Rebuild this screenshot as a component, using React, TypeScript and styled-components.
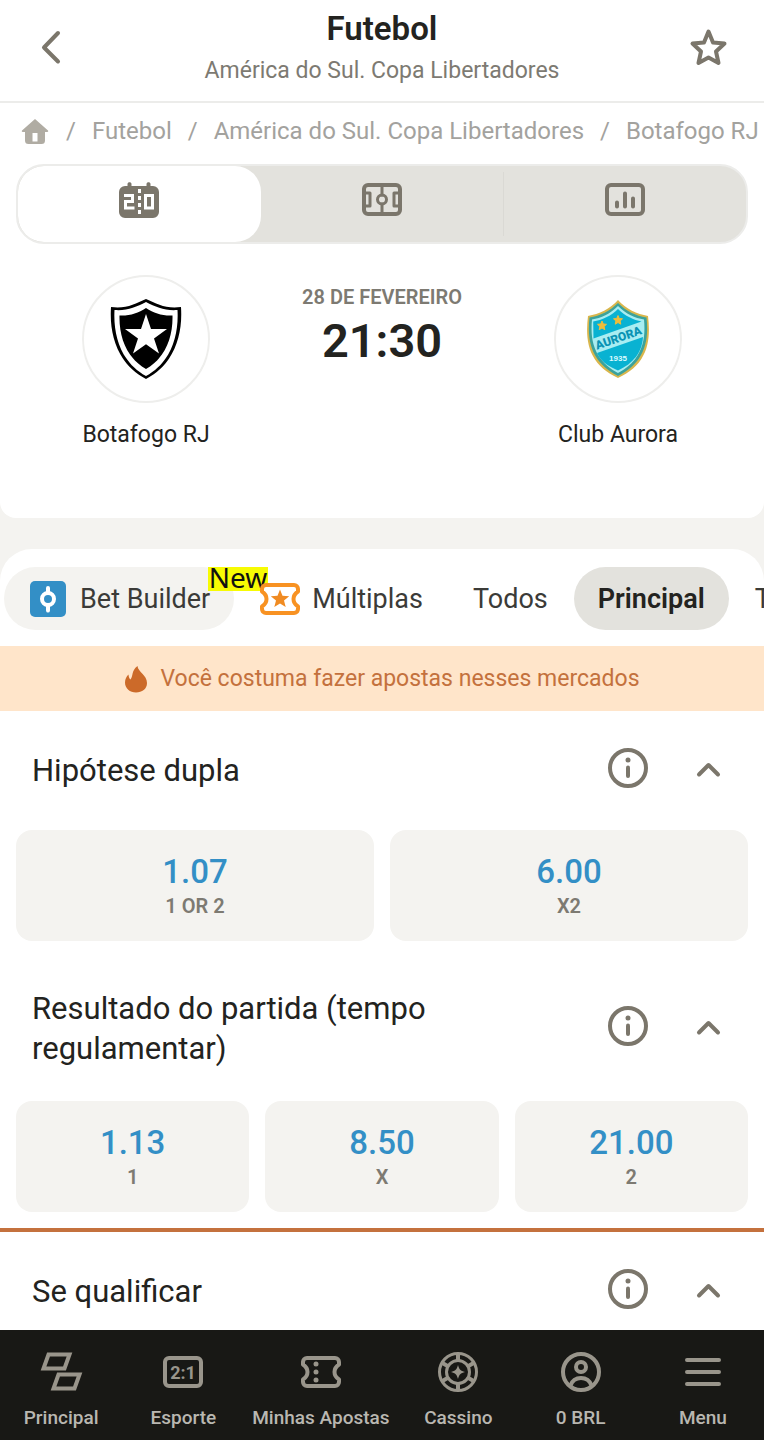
import React from "react";
import styled, { createGlobalStyle } from "styled-components";

const color = {
  ink: "#232320",
  text: "#3b3b38",
  icon: "#7b766b",
  muted: "#7d7a72",
  faint: "#a3a29e",
  line: "#ececea",
  fill: "#e3e2dd",
  soft: "#f4f3f0",
  blue: "#338fc6",
  orange: "#c4713d",
  peach: "#ffe5ca",
  night: "#181815",
};

const GlobalStyle = createGlobalStyle`
  *, *::before, *::after { box-sizing: border-box; }
  body {
    margin: 0;
    background: #fff;
    color: ${color.ink};
    font-family: Roboto, "Liberation Sans", sans-serif;
  }
  button {
    border: 0;
    padding: 0;
    background: none;
    color: inherit;
    font: inherit;
    cursor: pointer;
  }
  a { color: inherit; text-decoration: none; }
  h1, h2, p, ol { margin: 0; padding: 0; }
  svg { display: block; flex: none; }
`;

const Screen = styled.div`
  display: flex;
  flex-direction: column;
  height: 100vh;
  overflow: hidden;
`;

const TopBar = styled.header`
  flex: none;
  display: flex;
  align-items: center;
  justify-content: space-between;
  height: 103px;
  padding: 0 32px 8px;
  border-bottom: 2px solid ${color.line};
`;

const IconButton = styled.button`
  display: flex;
  align-items: center;
  justify-content: center;
  width: 48px;
  height: 48px;
  color: ${color.icon};
`;

const Heading = styled.div`
  padding-top: 4px;
  text-align: center;
`;

const PageTitle = styled.h1`
  font-size: 33px;
  line-height: 44px;
  font-weight: 600;
`;

const PageSubtitle = styled.p`
  font-size: 23px;
  line-height: 40px;
  color: ${color.muted};
`;

const Content = styled.main`
  flex: 1;
  min-height: 0;
  overflow-x: hidden;
  overflow-y: auto;
  scrollbar-width: none;
  background: ${color.soft};
`;

const MatchPanel = styled.section`
  background: #fff;
  border-radius: 0 0 16px 16px;
  padding-bottom: 67px;
`;

const Crumbs = styled.ol`
  display: flex;
  align-items: center;
  height: 61px;
  padding: 0 0 6px 20px;
  list-style: none;
  overflow: hidden;
  white-space: nowrap;
  font-size: 24px;
  line-height: 32px;
  color: ${color.faint};
`;

const Crumb = styled.li`
  display: flex;
  align-items: center;
  & + &::before {
    content: "/";
    margin: 0 16px;
  }
`;

const ViewTabs = styled.div`
  display: grid;
  grid-template-columns: repeat(3, 1fr);
  height: 80px;
  margin: 0 16px;
  border: 2px solid ${color.line};
  border-radius: 28px;
  background: ${color.fill};
  overflow: hidden;
`;

const ViewTab = styled.button<{ $active?: boolean; $divider?: boolean }>`
  display: flex;
  align-items: center;
  justify-content: center;
  padding-bottom: 8px;
  color: ${color.icon};
  background-color: ${(p) => (p.$active ? "#fff" : "transparent")};
  border-radius: ${(p) => (p.$active ? "26px" : "0")};
  background-image: ${(p) => (p.$divider ? "linear-gradient(#dad9d4, #dad9d4)" : "none")};
  background-repeat: no-repeat;
  background-position: left center;
  background-size: 1px 64px;
`;

const Teams = styled.div`
  display: grid;
  grid-template-columns: 228px 1fr 228px;
  padding: 31px 32px 0;
`;

const Team = styled.div`
  display: flex;
  flex-direction: column;
  align-items: center;
  gap: 16px;
  font-size: 23px;
  line-height: 32px;
`;

const Crest = styled.div`
  display: flex;
  align-items: center;
  justify-content: center;
  width: 128px;
  height: 128px;
  border: 2px solid #eeeeec;
  border-radius: 50%;
`;

const Kickoff = styled.div`
  padding-top: 6px;
  text-align: center;
  white-space: nowrap;
`;

const KickoffDate = styled.p`
  font-size: 20px;
  line-height: 32px;
  font-weight: 600;
  color: ${color.muted};
`;

const KickoffTime = styled.p`
  font-size: 47px;
  line-height: 56px;
  font-weight: 600;
`;

const MarketsPanel = styled.section`
  margin-top: 31px;
  background: #fff;
  border-radius: 32px 32px 0 0;
  overflow: hidden;
`;

const FilterBar = styled.div`
  display: flex;
  gap: 2px;
  padding: 18px 0 16px 4px;
  overflow: hidden;
`;

const Filter = styled.button<{ $tone?: "soft" | "active" }>`
  position: relative;
  flex: none;
  display: flex;
  align-items: center;
  gap: 12px;
  height: 63px;
  padding: 0 24px;
  border-radius: 32px;
  font-size: 27px;
  line-height: 32px;
  white-space: nowrap;
  color: ${(p) => (p.$tone === "active" ? color.ink : color.text)};
  font-weight: ${(p) => (p.$tone === "active" ? 600 : 400)};
  background: ${(p) =>
    p.$tone === "active" ? color.fill : p.$tone === "soft" ? color.soft : "transparent"};
`;

const NewBadge = styled.span`
  position: absolute;
  top: 0;
  right: -34px;
  padding: 0 1px 4px;
  background: #f7fb04;
  color: #111;
  font-family: "Noto Sans", "Open Sans", sans-serif;
  font-size: 28px;
  line-height: 20px;
`;

const Notice = styled.p`
  display: flex;
  align-items: center;
  justify-content: center;
  gap: 12px;
  height: 65px;
  background: ${color.peach};
  color: ${color.orange};
  font-size: 23px;
  line-height: 32px;
`;

const Market = styled.section<{ $marked?: boolean }>`
  padding-bottom: 16px;
  border-bottom: ${(p) => (p.$marked ? `4px solid ${color.orange}` : "0")};
`;

const MarketHeader = styled.div`
  display: flex;
  align-items: center;
  gap: 16px;
  min-height: 119px;
  padding: 32px;
`;

const MarketTitle = styled.h2`
  flex: 1;
  font-size: 31px;
  line-height: 40px;
  font-weight: 400;
`;

const TitleText = styled.span`
  display: block;
  max-width: 440px;
`;

const MarketActions = styled.div`
  display: flex;
  gap: 32px;
  padding-bottom: 4px;
`;

const OddsGrid = styled.div<{ $columns: number }>`
  display: grid;
  grid-template-columns: repeat(${(p) => p.$columns}, 1fr);
  gap: 16px;
  padding: 0 16px;
`;

const Odd = styled.button`
  display: flex;
  flex-direction: column;
  align-items: center;
  justify-content: center;
  height: 111px;
  border-radius: 16px;
  background: ${color.soft};
`;

const OddValue = styled.span`
  font-size: 33px;
  line-height: 40px;
  font-weight: 500;
  color: ${color.blue};
`;

const OddLabel = styled.span`
  font-size: 20px;
  line-height: 28px;
  font-weight: 600;
  color: ${color.muted};
`;

const BottomNav = styled.nav`
  flex: none;
  display: flex;
  height: 110px;
  padding-top: 20px;
  background: ${color.night};
`;

const NavItem = styled.a<{ $wide?: boolean }>`
  flex: ${(p) => (p.$wide ? 5 : 4)} 1 0;
  min-width: 0;
  display: flex;
  flex-direction: column;
  align-items: center;
  gap: 8px;
  color: #99958b;
`;

const NavLabel = styled.span`
  font-size: 19px;
  line-height: 32px;
  font-weight: 500;
  white-space: nowrap;
  color: #b9b7b1;
`;

const stroke = {
  fill: "none",
  stroke: "currentColor",
  strokeLinecap: "round" as const,
  strokeLinejoin: "round" as const,
};

const BackIcon = () => (
  <svg width="40" height="40" viewBox="0 0 40 40" {...stroke} strokeWidth="4" aria-hidden="true">
    <path d="M22 6 8 20.500 22 34.500" />
  </svg>
);

const StarIcon = () => (
  <svg width="40" height="40" viewBox="0 0 40 40" {...stroke} strokeWidth="4" aria-hidden="true">
    <path d="M20.500 4.500 25 15.500 36.500 16.500 28 24.500 30.500 36 20.500 30.500 10.500 36 13 24.500 4.500 16.500 16 15.500Z" />
  </svg>
);

const HomeIcon = () => (
  <svg width="30" height="30" viewBox="0 0 30 30" aria-hidden="true">
    <path
      fill="#b0aca3"
      fillRule="evenodd"
      d="M15 3 28 14.500c.5.700.2 1.500-.7 1.500H25v8.500a3.500 3.500 0 0 1-3.500 3.500h-13A3.500 3.500 0 0 1 5 24.500V16H2.700C1.800 16 1.500 15.200 2 14.500ZM12.500 17V25.500h5v-8.500Z"
    />
  </svg>
);

const ScoreboardIcon = () => (
  <svg width="40" height="40" viewBox="0 0 40 40" aria-hidden="true">
    <path
      fill="currentColor"
      d="M8.500 4c0-2.200 4-2.200 4 0v2h15V4c0-2.200 4-2.200 4 0v2H34a6 6 0 0 1 6 6v20a6 6 0 0 1-6 6H6a6 6 0 0 1-6-6V12a6 6 0 0 1 6-6h2.500Z"
    />
    <path fill="none" stroke="#fff" strokeWidth="3" d="M5 15.500h8.500v6h-7v6.500H15.500M26.500 15.500h7V28h-7Z" />
    <path fill="none" stroke="#fff" strokeWidth="3" strokeDasharray="4 3" d="M20.500 9V35" />
  </svg>
);

const PitchIcon = () => (
  <svg width="42" height="40" viewBox="0 0 42 40" {...stroke} strokeWidth="4" aria-hidden="true">
    <rect x="3" y="5" width="36" height="29" rx="4" />
    <path strokeWidth="3" d="M4 13h5v13H4M38 13h-5v13H38M21 6v9M21 24v9" />
    <circle cx="21" cy="19.500" r="4.500" strokeWidth="3" />
  </svg>
);

const StatsIcon = () => (
  <svg width="42" height="40" viewBox="0 0 42 40" {...stroke} strokeWidth="4" aria-hidden="true">
    <rect x="3" y="5" width="36" height="29" rx="4" />
    <path d="M13 22.500v4M21 13.500v13M29 18.500v8" />
  </svg>
);

const BotafogoCrest = () => (
  <svg width="72" height="82" viewBox="0 0 72 82" role="img" aria-label="Botafogo RJ">
    <path d="M1 9C16 11 25 6 36 1c11 5 20 10 35 8C73 39 63 67 36 81 9 67-1 39 1 9Z" fill="#000" />
    <path d="M4.500 12C17 13 26 9 36 4c10 5 19 9 31.500 8C69 39 60 65 36 78 12 65 3 39 4.500 12Z" fill="#fff" />
    <path d="M9.500 17.500C20 18 28 15 36 10c8 5 16 8 26.500 7.500C63 40 55 60 36 71 17 60 9 40 9.500 17.500Z" fill="#000" />
    <path d="m36 16 5 15H57L44 40.500 49 55.500 36 46.200 23 55.500l5-15L15 31h16Z" fill="#fff" />
  </svg>
);

const AuroraCrest = () => (
  <svg width="64" height="80" viewBox="0 0 64 80" role="img" aria-label="Club Aurora">
    <path d="M32 1C40 10 51 15 62 17c3 25 0 48-30 62C2 65-1 42 2 17 13 15 24 10 32 1Z" fill="#d9b64c" />
    <path d="M32 4C40 12 50 17 60.500 18.500 63 42 59 63 32 77 5 63 1 42 3.500 18.500 14 17 24 12 32 4Z" fill="#3ba29c" />
    <path d="M32 7C40 15 49 19 58 20.500 60 42 56 61 32 74 8 61 4 42 6 20.500 15 19 24 15 32 7Z" fill="#a8edf2" />
    <path d="M32 10C39 17 48 21 55.500 22.500l-48 17-.3-17C16 21 25 17 32 10Z" fill="#09b2d2" />
    <path d="M11 54 57 38C56 53 48 64 32 71.500 21 67 14 61 11 54Z" fill="#09b2d2" />
    <path d="m16 22 1.300 3 3.200.3-2.400 2.200.7 3.200-2.800-1.700-2.800 1.700.7-3.200-2.400-2.200 3.200-.3ZM32 16.500l1.300 3 3.200.3-2.400 2.200.7 3.200-2.800-1.700-2.800 1.700.7-3.200-2.400-2.200 3.200-.3Z" fill="#efbd3a" stroke="#efbd3a" />
    <text x="32.500" y="43" transform="rotate(-19 32.500 39)" textAnchor="middle" fontFamily="Roboto, sans-serif" fontSize="12" fontWeight="900" fill="#0a93b4">
      AURORA
    </text>
    <text x="32" y="62" textAnchor="middle" fontFamily="Liberation Sans, sans-serif" fontSize="8" fontWeight="700" fill="#d9fbff">
      1935
    </text>
  </svg>
);

const BuilderIcon = () => (
  <svg width="40" height="40" viewBox="0 0 40 40" aria-hidden="true">
    <rect x="2" y="2" width="36" height="36" rx="5" fill={color.blue} />
    <g fill="none" stroke="#fff" strokeWidth="4" strokeLinecap="round">
      <circle cx="20" cy="20" r="6" />
      <path d="M20 9v5M20 26v5.500" />
    </g>
  </svg>
);

const ComboSvg = styled.svg`
  position: relative;
  z-index: 1;
`;

const ComboIcon = () => (
  <ComboSvg width="40" height="40" viewBox="0 0 40 40" aria-hidden="true">
    <path
      d="M6 6h28a4 4 0 0 1 4 4v2.500c-6 4-6 11 0 15V30a4 4 0 0 1-4 4H6a4 4 0 0 1-4-4v-2.500c6-4 6-11 0-15V10a4 4 0 0 1 4-4Z"
      fill="#fff"
      stroke="#f89222"
      strokeWidth="4"
      strokeLinejoin="round"
    />
    <path d="m20 10.500 2.500 6.300 6.700.4-5.200 4.300 1.700 6.500-5.700-3.600-5.700 3.600 1.700-6.500-5.200-4.300 6.700-.4Z" fill="#f08b22" />
  </ComboSvg>
);

const FlameIcon = () => (
  <svg width="24" height="28" viewBox="0 0 24 28" aria-hidden="true">
    <path
      d="M13.500 1C14 7 23 10 23 18c0 6-5 9.500-11 9.500S1 23.500 1 17.500c0-3.500 1.500-6 3.500-8 .2 2.500.8 4 2 5C9.500 11 7 6 13.500 1Z"
      fill="#cc6a29"
    />
  </svg>
);

const InfoIcon = () => (
  <svg width="42" height="42" viewBox="0 0 42 42" {...stroke} strokeWidth="4" aria-hidden="true">
    <circle cx="21" cy="20" r="18" />
    <path d="M21 19.500v8.500" />
    <circle cx="21" cy="12" r="2.500" fill="currentColor" stroke="none" />
  </svg>
);

const CollapseIcon = () => (
  <svg width="30" height="30" viewBox="0 0 30 30" {...stroke} strokeWidth="4" aria-hidden="true">
    <path d="M6 20.500 15.500 11l9.500 9.500" />
  </svg>
);

const LinesIcon = () => (
  <svg width="44" height="44" viewBox="0 0 44 44" fill="none" stroke="currentColor" strokeWidth="4" aria-hidden="true">
    <path d="M10.500 4.500H31.500L26.500 18.500H5.500ZM20.500 24.500H41.500L36.500 38.500H15.500Z" transform="translate(-1)" />
  </svg>
);

const SportIcon = () => (
  <svg width="44" height="44" viewBox="0 0 44 44" aria-hidden="true">
    <rect x="4" y="8" width="36" height="28" rx="4" fill="none" stroke="currentColor" strokeWidth="4" />
    <text x="22" y="28.500" textAnchor="middle" fontFamily="Roboto, sans-serif" fontSize="18" fontWeight="700" fill="currentColor">
      2:1
    </text>
  </svg>
);

const TicketIcon = () => (
  <svg width="44" height="44" viewBox="0 0 44 44" {...stroke} strokeWidth="4" aria-hidden="true">
    <path d="M8 8h28a4 4 0 0 1 4 4v2.500c-6 4-6 11 0 15V32a4 4 0 0 1-4 4H8a4 4 0 0 1-4-4v-2.500c6-4 6-11 0-15V12a4 4 0 0 1 4-4Z" />
    <g fill="currentColor" stroke="none">
      <circle cx="17" cy="14" r="2.500" />
      <circle cx="17" cy="22" r="2.500" />
      <circle cx="17" cy="30" r="2.500" />
    </g>
  </svg>
);

const ChipIcon = () => (
  <svg width="44" height="44" viewBox="0 0 44 44" fill="none" stroke="currentColor" strokeWidth="3" aria-hidden="true">
    <circle cx="22" cy="22" r="18.500" />
    <circle cx="22" cy="22" r="11.500" />
    <path
      strokeWidth="4"
      d="M22 4v7M22 33v7M6.400 13l6 3.500M31.600 27.500l6 3.500M6.400 31l6-3.500M31.600 16.500l6-3.500"
    />
    <path d="M22 15c1.200 4.500 2.500 5.800 7 7-4.500 1.200-5.800 2.500-7 7-1.200-4.500-2.500-5.800-7-7 4.500-1.200 5.800-2.500 7-7Z" fill="currentColor" stroke="none" />
  </svg>
);

const AccountIcon = () => (
  <svg width="44" height="44" viewBox="0 0 44 44" {...stroke} strokeWidth="4" aria-hidden="true">
    <circle cx="22" cy="22" r="18" />
    <circle cx="22" cy="17" r="5" />
    <path d="M11.500 35.500C15 25.500 29 25.500 32.500 35.500" />
  </svg>
);

const MenuIcon = () => (
  <svg width="44" height="44" viewBox="0 0 44 44" {...stroke} strokeWidth="4" aria-hidden="true">
    <path d="M6 10h32M6 22h32M6 34h32" />
  </svg>
);

type MarketProps = {
  title: string;
  odds: { value: string; label: string }[];
  marked?: boolean;
};

const MarketBlock = ({ title, odds, marked }: MarketProps) => (
  <Market $marked={marked}>
    <MarketHeader>
      <MarketTitle>
        <TitleText>{title}</TitleText>
      </MarketTitle>
      <MarketActions>
        <IconButton aria-label={`Informações: ${title}`}>
          <InfoIcon />
        </IconButton>
        <IconButton aria-label={`Recolher: ${title}`} aria-expanded="true">
          <CollapseIcon />
        </IconButton>
      </MarketActions>
    </MarketHeader>
    {odds.length > 0 && (
      <OddsGrid $columns={odds.length}>
        {odds.map((odd) => (
          <Odd key={odd.label}>
            <OddValue>{odd.value}</OddValue>
            <OddLabel>{odd.label}</OddLabel>
          </Odd>
        ))}
      </OddsGrid>
    )}
  </Market>
);

const markets: MarketProps[] = [
  {
    title: "Hipótese dupla",
    odds: [
      { value: "1.07", label: "1 OR 2" },
      { value: "6.00", label: "X2" },
    ],
  },
  {
    title: "Resultado do partida (tempo regulamentar)",
    odds: [
      { value: "1.13", label: "1" },
      { value: "8.50", label: "X" },
      { value: "21.00", label: "2" },
    ],
    marked: true,
  },
  { title: "Se qualificar", odds: [] },
];

const navItems = [
  { label: "Principal", Icon: LinesIcon },
  { label: "Esporte", Icon: SportIcon },
  { label: "Minhas Apostas", Icon: TicketIcon, wide: true },
  { label: "Cassino", Icon: ChipIcon },
  { label: "0 BRL", Icon: AccountIcon },
  { label: "Menu", Icon: MenuIcon },
];

export default function App() {
  return (
    <>
      <GlobalStyle />
      <Screen>
        <TopBar>
          <IconButton aria-label="Voltar">
            <BackIcon />
          </IconButton>
          <Heading>
            <PageTitle>Futebol</PageTitle>
            <PageSubtitle>América do Sul. Copa Libertadores</PageSubtitle>
          </Heading>
          <IconButton aria-label="Favoritar">
            <StarIcon />
          </IconButton>
        </TopBar>

        <Content>
          <MatchPanel>
            <nav aria-label="Trilha">
              <Crumbs>
                <Crumb>
                  <a href="#inicio" aria-label="Início">
                    <HomeIcon />
                  </a>
                </Crumb>
                <Crumb>
                  <a href="#futebol">Futebol</a>
                </Crumb>
                <Crumb>
                  <a href="#libertadores">América do Sul. Copa Libertadores</a>
                </Crumb>
                <Crumb>
                  <a href="#partida">Botafogo RJ - Club Aurora</a>
                </Crumb>
              </Crumbs>
            </nav>

            <ViewTabs role="tablist">
              <ViewTab role="tab" aria-selected="true" aria-label="Placar" $active>
                <ScoreboardIcon />
              </ViewTab>
              <ViewTab role="tab" aria-selected="false" aria-label="Campo">
                <PitchIcon />
              </ViewTab>
              <ViewTab role="tab" aria-selected="false" aria-label="Estatísticas" $divider>
                <StatsIcon />
              </ViewTab>
            </ViewTabs>

            <Teams>
              <Team>
                <Crest>
                  <BotafogoCrest />
                </Crest>
                Botafogo RJ
              </Team>
              <Kickoff>
                <KickoffDate>28 DE FEVEREIRO</KickoffDate>
                <KickoffTime>21:30</KickoffTime>
              </Kickoff>
              <Team>
                <Crest>
                  <AuroraCrest />
                </Crest>
                Club Aurora
              </Team>
            </Teams>
          </MatchPanel>

          <MarketsPanel>
            <FilterBar>
              <Filter $tone="soft">
                <BuilderIcon />
                Bet Builder
                <NewBadge>New</NewBadge>
              </Filter>
              <Filter>
                <ComboIcon />
                Múltiplas
              </Filter>
              <Filter>Todos</Filter>
              <Filter $tone="active">Principal</Filter>
              <Filter>Totais</Filter>
            </FilterBar>

            <Notice>
              <FlameIcon />
              Você costuma fazer apostas nesses mercados
            </Notice>

            {markets.map((market) => (
              <MarketBlock key={market.title} {...market} />
            ))}
          </MarketsPanel>
        </Content>

        <BottomNav>
          {navItems.map(({ label, Icon, wide }) => (
            <NavItem key={label} href="#" $wide={wide}>
              <Icon />
              <NavLabel>{label}</NavLabel>
            </NavItem>
          ))}
        </BottomNav>
      </Screen>
    </>
  );
}
